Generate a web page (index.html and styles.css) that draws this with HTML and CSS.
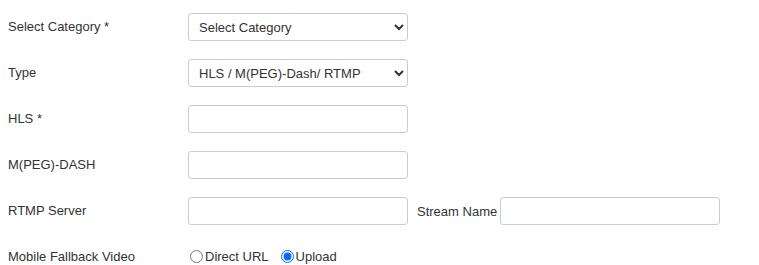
FILE: index.html
```html
<!DOCTYPE html>
<html lang="en">
<head>
	<meta charset="UTF-8">
	<title>Stream Settings</title>
	<link rel="stylesheet" href="styles.css">
</head>
<body>
	<form id="stream-form">
		<div class="f-row">
			<label class="f-label">Select Category *</label>
			<select class="f-control">
				<option>Select Category</option>
			</select>
		</div>
		<div class="f-row">
			<label class="f-label">Type</label>
			<select class="f-control">
				<option>HLS / M(PEG)-Dash/ RTMP</option>
			</select>
		</div>
		<div class="f-row">
			<label class="f-label">HLS *</label>
			<input class="f-control" type="text">
		</div>
		<div class="f-row">
			<label class="f-label">M(PEG)-DASH</label>
			<input class="f-control" type="text">
		</div>
		<div class="f-row">
			<label class="f-label">RTMP Server</label>
			<input class="f-control" type="text">
			<span class="f-inline">Stream Name</span>
			<input class="f-control" type="text">
		</div>
		<div class="f-row radio-row">
			<label class="f-label">Mobile Fallback Video</label>
			<label class="f-radio"><input type="radio" name="fallback">Direct URL</label>
			<label class="f-radio"><input type="radio" name="fallback" checked>Upload</label>
		</div>
	</form>
</body>
</html>
```

FILE: styles.css
```css
body {
	margin: 8px;
	font-family: "Liberation Sans", Arial, sans-serif;
	font-size: 13px;
	color: #333;
	background-color: #fff;
}
#stream-form {
	padding-top: 5px;
}
.f-row {
	display: flex;
	align-items: center;
	height: 28px;
	margin-bottom: 18px;
}
.f-label {
	width: 180px;
	flex-shrink: 0;
	margin-top: -2px;
}
.f-control {
	box-sizing: border-box;
	width: 220px;
	height: 28px;
	padding: 0 10px;
	border: 1px solid #ccc;
	border-radius: 3px;
	background-color: #fff;
	font-family: inherit;
	font-size: 13px;
	color: #333;
}
select.f-control {
	padding: 0 6px;
}
.f-inline {
	margin: 0 3px 0 9px;
}
.radio-row {
	height: 26px;
	margin-bottom: 0;
}
.radio-row .f-label {
	margin-top: 0;
}
.f-radio {
	display: flex;
	align-items: center;
	margin-right: 10px;
}
.f-radio input {
	margin: 0 2px 0 2px;
	accent-color: #0a6cf5;
}
```
